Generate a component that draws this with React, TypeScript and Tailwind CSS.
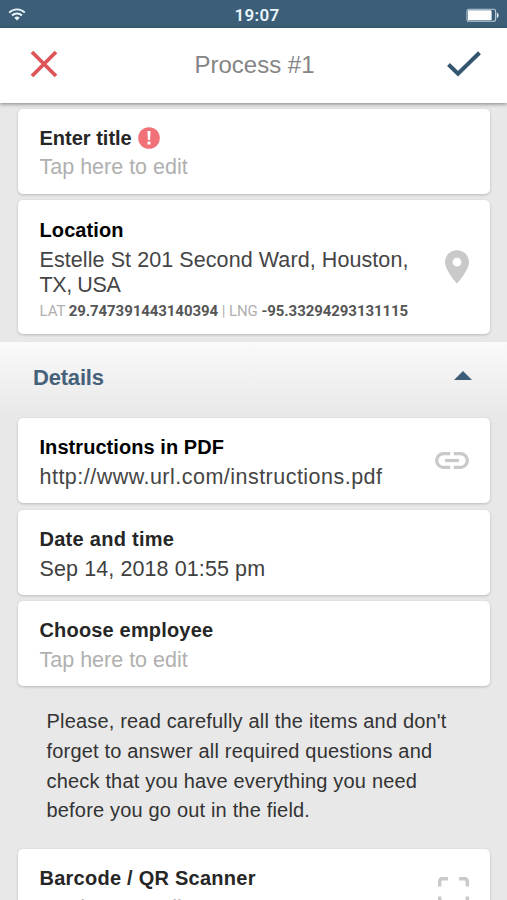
import type { ReactNode } from "react";
import clsx from "clsx";

const NOTE_LINES = [
  "Please, read carefully all the items and don't",
  "forget to answer all required questions and",
  "check that you have everything you need",
  "before you go out in the field.",
];

function WifiIcon() {
  return (
    <svg width="18" height="13" viewBox="0 0 18 13" fill="none" stroke="#e9f5fb" aria-hidden="true">
      <path d="M1.2 4.6a11 11 0 0 1 15.6 0" strokeWidth="1.9" />
      <path d="M4 7.500a7.100 7.100 0 0 1 10 0" strokeWidth="1.9" />
      <path d="M9 12.600 6.300 9.800a3.900 3.900 0 0 1 5.400 0z" fill="#e9f5fb" stroke="none" />
    </svg>
  );
}

function BatteryIcon() {
  return (
    <svg width="34" height="14" viewBox="0 0 34 14" aria-hidden="true">
      <rect x="1" y="1.200" width="28.600" height="12" rx="2" fill="none" stroke="#b9cedb" strokeWidth="1.100" />
      <rect x="2" y="2.200" width="23.600" height="10" rx="0.800" fill="#ffffff" />
      <path d="M30.800 4.600c2.400.8 2.400 4.800 0 5.600z" fill="#dcebf3" />
    </svg>
  );
}

function PinIcon() {
  return (
    <svg width="24" height="34" viewBox="0 0 24 34" fill="#c9c9c9" aria-hidden="true">
      <path
        fillRule="evenodd"
        d="M12 .3C5.300.3 0 5.500 0 12.100 0 20.700 12 33.600 12 33.600S24 20.700 24 12.100C24 5.500 18.700.3 12 .3zm0 7.500a4.400 4.400 0 1 1 0 8.800 4.400 4.400 0 0 1 0-8.800z"
      />
    </svg>
  );
}

function LinkIcon() {
  return (
    <svg width="34" height="17" viewBox="0 0 34 17" fill="none" stroke="#c9c9c9" strokeWidth="3.200" aria-hidden="true">
      <path d="M15.200 1.700H8.500a6.800 6.800 0 0 0 0 13.600h6.700" />
      <path d="M18.800 1.700h6.700a6.800 6.800 0 0 1 0 13.600h-6.700" />
      <path d="M10 8.500h14" />
    </svg>
  );
}

function ScanIcon() {
  return (
    <svg width="31" height="31" viewBox="0 0 31 31" fill="none" stroke="#c9c9c9" strokeWidth="3.400" aria-hidden="true">
      <path d="M1.700 9.500V4a2.300 2.300 0 0 1 2.300-2.300h6M21 1.700h6A2.300 2.300 0 0 1 29.300 4v5.500M1.700 19.500V27A2.300 2.300 0 0 0 4 29.300h6M29.300 19.500V27a2.300 2.300 0 0 1-2.300 2.300h-6" />
    </svg>
  );
}

function RequiredBadge() {
  return (
    <svg width="22" height="22" viewBox="0 0 22 22" aria-hidden="true">
      <circle cx="11" cy="11" r="10.800" fill="#f07177" />
      <path d="M9.400 4h3.200l-.5 9h-2.200z" fill="#fff" />
      <rect x="9.500" y="14.500" width="3" height="3" rx="0.500" fill="#fff" />
    </svg>
  );
}

function Card({
  title,
  titleClass = "text-[#262626]",
  className = "h-[85px] pt-[17px]",
  badge,
  icon,
  children,
}: {
  title: string;
  titleClass?: string;
  className?: string;
  badge?: ReactNode;
  icon?: ReactNode;
  children: ReactNode;
}) {
  return (
    <section
      className={clsx(
        "flex w-[472px] shrink-0 justify-between rounded-[5px] bg-white pl-[22px] shadow-[0_1px_3px_rgba(0,0,0,0.2)]",
        className,
      )}
    >
      <div>
        <h2 className={clsx("flex h-6 items-center gap-[6px] text-[20px] leading-6 font-bold whitespace-nowrap", titleClass)}>
          {title}
          {badge}
        </h2>
        <div className="mt-[6px] text-[21.5px] leading-[25px] whitespace-nowrap">{children}</div>
      </div>
      {icon}
    </section>
  );
}

export default function App() {
  return (
    <div className="flex h-[900px] w-[507px] flex-col overflow-hidden bg-[#e8e8e8] font-['Liberation_Sans',Arial,sans-serif]">
      <div className="grid h-7 shrink-0 grid-cols-[1fr_auto_1fr] items-center bg-[#3d5e78] pr-[7px] pl-[14px]">
        <span className="-ml-[6px]">
          <WifiIcon />
        </span>
        <span className="pt-px font-['Roboto',sans-serif] text-[17px] leading-7 font-semibold tracking-[0.3px] text-[#e9f5fb]">
          19:07
        </span>
        <span className="justify-self-end">
          <BatteryIcon />
        </span>
      </div>

      <header className="z-10 flex h-[75px] shrink-0 items-center justify-between bg-white pr-[26px] pb-[2px] pl-[30px] shadow-[0_1px_4px_rgba(0,0,0,0.45)]">
        <button type="button" aria-label="Cancel" className="-mt-[2px]">
          <svg width="28" height="28" viewBox="0 0 28 28" fill="none" stroke="#dc5558" strokeWidth="3.800">
            <path d="M2 2l24 24M26 2L2 26" />
          </svg>
        </button>
        <h1 className="pt-px pl-[4px] text-[24px] leading-7 text-[#858585]">Process #1</h1>
        <button type="button" aria-label="Save">
          <svg width="34" height="27" viewBox="0 0 34 27" fill="none" stroke="#34566f" strokeWidth="4">
            <path d="M1.500 13.500l9.500 9.300L32.500 1.700" />
          </svg>
        </button>
      </header>

      <main className="flex shrink-0 flex-col items-center">
        <div className="mt-[6px] flex flex-col gap-[6px]">
          <Card title="Enter title" badge={<RequiredBadge />}>
            <p className="-mt-px text-[#b0b0b0]">Tap here to edit</p>
          </Card>
          <Card
            title="Location"
            titleClass="text-black tracking-[0.1px]"
            className="h-[134px] pt-[18px]"
            icon={
              <span className="mt-[32px] mr-[21px]">
                <PinIcon />
              </span>
            }
          >
            <p className="tracking-[0.08px] text-[#454545]">Estelle St 201 Second Ward, Houston,</p>
            <p className="tracking-[-0.4px] text-[#454545]">TX, USA</p>
            <p className="mt-[3px] font-['Roboto',sans-serif] text-[15px] leading-[20px] tracking-[-0.07px] text-[#b0b0b0]">
              LAT <b className="text-[#555555]">29.747391443140394</b> | LNG <b className="text-[#555555]">-95.33294293131115</b>
            </p>
          </Card>
        </div>

        <div className="mt-2 flex h-[76px] w-full items-center justify-between bg-linear-to-b from-[#fafafa] to-[#e8e8e8] pr-[35px] pb-1 pl-[33px]">
          <h2 className="text-[22px] leading-7 font-bold tracking-[-0.2px] text-[#46617a]">Details</h2>
          <svg width="18" height="9" viewBox="0 0 18 9" className="mb-[6px]" aria-hidden="true">
            <path d="M0 9L9 0l9 9z" fill="#3d5e78" />
          </svg>
        </div>

        <div className="flex flex-col gap-[6.5px]">
          <Card
            title="Instructions in PDF"
            titleClass="text-black tracking-[0.06px]"
            icon={
              <span className="mt-[17px] mr-[21px]">
                <LinkIcon />
              </span>
            }
          >
            <span className="tracking-[0.48px] text-[#454545]">http://www.url.com/instructions.pdf</span>
          </Card>
          <Card title="Date and time" titleClass="text-[#262626] tracking-[0.27px]">
            <span className="tracking-[0.1px] text-[#404040]">Sep 14, 2018 01:55 pm</span>
          </Card>
          <Card title="Choose employee" titleClass="text-[#262626] tracking-[0.17px]">
            <span className="text-[#b0b0b0]">Tap here to edit</span>
          </Card>
        </div>

        <div className="mt-[21px] w-full pl-[46.5px] text-[20px] leading-[29.8px] tracking-[0.18px] whitespace-nowrap text-[#333333]">
          {NOTE_LINES.map((line) => (
            <p key={line}>{line}</p>
          ))}
        </div>

        <Card
          title="Barcode / QR Scanner"
          titleClass="text-[#262626] tracking-[0.25px]"
          className="mt-[22.5px] h-[85px] pt-[17px]"
          icon={
            <span className="mt-[11px] mr-[21px]">
              <ScanIcon />
            </span>
          }
        >
          <span className="text-[#b0b0b0]">Tap here to edit</span>
        </Card>
      </main>
    </div>
  );
}
